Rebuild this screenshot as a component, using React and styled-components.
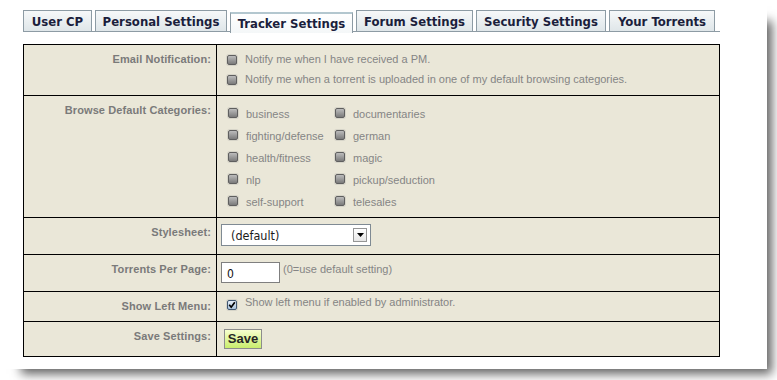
import React from 'react';
import styled, { createGlobalStyle } from 'styled-components';

const EMAIL_OPTIONS = [
  'Notify me when I have received a PM.',
  'Notify me when a torrent is uploaded in one of my default browsing categories.',
];

const CATEGORIES = [
  'business', 'documentaries',
  'fighting/defense', 'german',
  'health/fitness', 'magic',
  'nlp', 'pickup/seduction',
  'self-support', 'telesales',
];

const TABS = ['User CP', 'Personal Settings', 'Tracker Settings', 'Forum Settings', 'Security Settings', 'Your Torrents'];

const GlobalStyle = createGlobalStyle`
  html {
    overflow: hidden;
  }
  body {
    margin: 0;
    padding: 0;
    min-height: 380px;
    background: #fff;
  }
`;

const Page = styled.div`
  width: 767px;
  height: 369px;
  box-sizing: border-box;
  padding: 10px 0 0 23px;
  background: #fff;
  box-shadow: 13px 13px 10px -8px rgba(0, 0, 0, 0.62);
`;

const Content = styled.div`
  width: 697px;
`;

const TabBar = styled.div`
  display: flex;
  align-items: flex-start;
  gap: 3px;
  height: 21px;
  border-bottom: 1px solid #8d9ba4;
`;

const Tab = styled.div`
  display: flex;
  align-items: center;
  justify-content: center;
  box-sizing: border-box;
  width: ${p => p.$w}px;
  height: 21px;
  margin-top: ${p => (p.$active ? '2px' : '0')};
  border: 1px solid #8d9ba4;
  border-top: ${p => (p.$active ? '2px solid #b3c7cf' : '1px solid #8d9ba4')};
  border-bottom: none;
  background: ${p => (p.$active
    ? 'linear-gradient(#ffffff, #f4f7f8)'
    : 'linear-gradient(#f6f8f9, #dfe6e9)')};
  font: bold 13px "DejaVu Sans Condensed", "DejaVu Sans", Verdana, sans-serif;
  color: #1b1e3c;
  white-space: nowrap;
`;

const Form = styled.div`
  margin-top: 12px;
  border: 1px solid #000;
  background: #eae7d8;
`;

const Row = styled.div`
  display: grid;
  grid-template-columns: 193px 1fr;
  border-top: 1px solid #000;

  &:first-child {
    border-top: none;
  }
`;

const Label = styled.div`
  border-right: 1px solid #000;
  padding: 8px 5px 0 0;
  text-align: right;
  font: bold 11px/13px "Liberation Sans", Arial, sans-serif;
  letter-spacing: 0.1px;
  color: #7a7a7a;
`;

const Field = styled.div`
  padding: ${p => p.$pad};
  font: 11px/13px "Liberation Sans", Arial, sans-serif;
  color: #858585;
`;

const Option = styled.div`
  display: flex;
  align-items: center;
  gap: 8px;
  height: ${p => p.$h}px;
  white-space: nowrap;
`;

const Check = styled.span`
  flex: none;
  display: flex;
  align-items: center;
  justify-content: center;
  box-sizing: border-box;
  width: 10px;
  height: 10px;
  border: 1px solid ${p => (p.$checked ? '#3f5670' : '#5f5f5f')};
  border-radius: 2px;
  background: ${p => (p.$checked
    ? 'linear-gradient(#e4edf7, #a9c2db)'
    : 'linear-gradient(#bcbcbc, #7b7b7b)')};
  box-shadow: 0 0 0 1px #d6d4c8;
  margin-top: ${p => (p.$dy > 0 ? p.$dy * 2 : 0)}px;
  margin-bottom: ${p => (p.$dy < 0 ? -p.$dy * 2 : 0)}px;
`;

const CategoryGrid = styled.div`
  display: grid;
  grid-template-columns: 107px auto;
  grid-auto-rows: 22px;
`;

const Select = styled.div`
  display: flex;
  align-items: center;
  justify-content: space-between;
  box-sizing: border-box;
  width: 150px;
  height: 22px;
  padding: 0 3px 0 9px;
  border: 1px solid #7f8a93;
  background: #fff;
  font: 12.5px "DejaVu Sans Condensed", "DejaVu Sans", Verdana, sans-serif;
  color: #1a1a1a;
`;

const SelectButton = styled.span`
  display: flex;
  align-items: center;
  justify-content: center;
  box-sizing: border-box;
  width: 14px;
  height: 14px;
  border: 1px solid #959595;
  background: linear-gradient(#ffffff, #e6e6e6);
`;

const InputLine = styled.div`
  display: flex;
  align-items: flex-start;
  gap: 3px;
`;

const NumberInput = styled.input`
  box-sizing: border-box;
  width: 59px;
  height: 21px;
  margin: 0;
  padding: 2px 0 0 5px;
  border: 1px solid #7f7f7f;
  background: #fff;
  font: 12px "DejaVu Sans Condensed", "DejaVu Sans", Verdana, sans-serif;
  color: #111;
  outline: none;
`;

const Hint = styled.span`
  margin-top: 1px;
`;

const SaveButton = styled.button`
  box-sizing: border-box;
  width: 38px;
  height: 20px;
  margin: 0;
  padding: 0;
  border: 1px solid #8c8c8c;
  background: linear-gradient(#f7ffcf, #c9ee6c);
  font: bold 13px/18px "Liberation Sans", Arial, sans-serif;
  color: #262626;
  cursor: pointer;
`;

const TAB_WIDTHS = [69, 132, 123, 117, 130, 106];

const CheckMark = () => (
  <svg width="8" height="8" viewBox="0 0 8 8">
    <path d="M1.2 3.8 L3.2 6.2 L6.8 1.2" fill="none" stroke="#000" strokeWidth="1.7" />
  </svg>
);

const Arrow = () => (
  <svg width="7" height="4" viewBox="0 0 7 4">
    <path d="M0 0 H7 L3.5 4 Z" fill="#000" />
  </svg>
);

const App = () => (
  <>
    <GlobalStyle />
    <Page>
      <Content>
        <TabBar>
          {TABS.map((t, i) => (
            <Tab key={t} $w={TAB_WIDTHS[i]} $active={t === 'Tracker Settings'}>{t}</Tab>
          ))}
        </TabBar>

        <Form>
          <Row>
            <Label>Email Notification:</Label>
            <Field $pad="4px 0 6px 10px">
              {EMAIL_OPTIONS.map(text => (
                <Option key={text} $h={20}>
                  <Check $dy={1} />
                  {text}
                </Option>
              ))}
            </Field>
          </Row>

          <Row>
            <Label>Browse Default Categories:</Label>
            <Field $pad="7px 0 4px 11px">
              <CategoryGrid>
                {CATEGORIES.map(c => (
                  <Option key={c} $h={22}>
                    <Check $dy={-1.5} />
                    {c}
                  </Option>
                ))}
              </CategoryGrid>
            </Field>
          </Row>

          <Row>
            <Label>Stylesheet:</Label>
            <Field $pad="6px 0 8px 4px">
              <Select>
                (default)
                <SelectButton><Arrow /></SelectButton>
              </Select>
            </Field>
          </Row>

          <Row>
            <Label>Torrents Per Page:</Label>
            <Field $pad="7px 0 8px 4px">
              <InputLine>
                <NumberInput defaultValue="0" size={3} />
                <Hint>(0=use default setting)</Hint>
              </InputLine>
            </Field>
          </Row>

          <Row>
            <Label>Show Left Menu:</Label>
            <Field $pad="2px 0 11px 10px">
              <Option $h={16}>
                <Check $checked $dy={3}><CheckMark /></Check>
                Show left menu if enabled by administrator.
              </Option>
            </Field>
          </Row>

          <Row>
            <Label>Save Settings:</Label>
            <Field $pad="7px 0 7px 7px">
              <SaveButton type="button">Save</SaveButton>
            </Field>
          </Row>
        </Form>
      </Content>
    </Page>
  </>
);

export default App;
